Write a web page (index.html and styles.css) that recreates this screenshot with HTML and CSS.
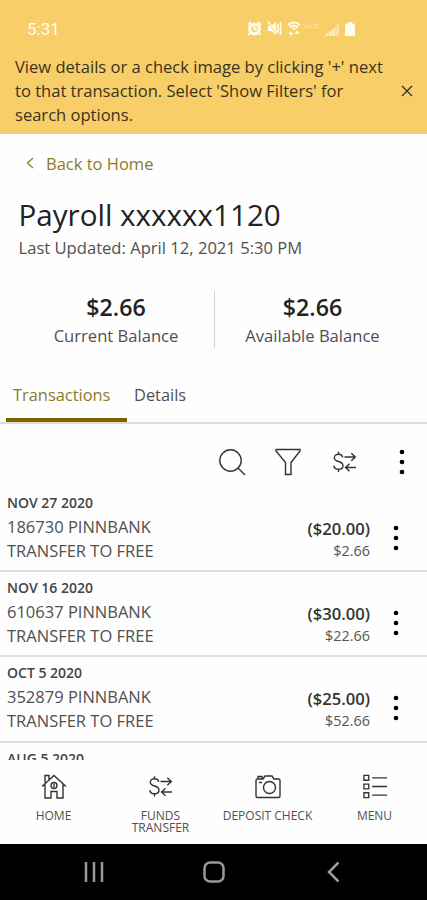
FILE: index.html
```html
<!DOCTYPE html>
<html lang="en">
<head>
<meta charset="utf-8">
<title>Account transactions</title>
<link rel="stylesheet" href="styles.css">
</head>
<body>
<svg width="0" height="0" class="defs">
  <symbol id="transfer" viewBox="0 0 24 22">
    <path d="M9.8 6.2C9.3 4.3 7.600 3.300 5.400 3.300C3 3.300 1.300 4.600 1.300 6.700C1.300 11.700 10 9.300 10 14.500C10 16.900 8 18.300 5.600 18.300C3 18.300 1.100 16.900 .8 14.600M5.500 .8V3.300M5.500 18.300V21"/>
    <path d="M11.500 6H22M18.300 2.200L22.300 6L18.300 9.800M23 16.500H12.500M16.500 12.700L12.500 16.500L16.500 20.300"/>
  </symbol>
  <symbol id="dots" viewBox="0 0 6 26">
    <circle cx="3" cy="3" r="2.350"/><circle cx="3" cy="13" r="2.350"/><circle cx="3" cy="23" r="2.350"/>
  </symbol>
</svg>
<div class="screen">
  <header class="notice">
    <div class="status">
      <span class="clock">5:31</span>
      <div class="indicators">
        <svg width="15" height="15" viewBox="0 0 15 15"><circle cx="7.500" cy="8" r="4.800" fill="none" stroke="#fffdf2" stroke-width="3"/><path d="M7.500 5V8.500H10M1 4L4 1M11 1L14 4M3 12L1.500 14M12 12L13.500 14" fill="none" stroke="#fffdf2" stroke-width="1.800"/></svg>
        <svg width="15" height="15" viewBox="0 0 15 15"><path d="M1 5H4L9 1V14L4 10H1Z" fill="#fffdf2"/><path d="M0 1L11 13" stroke="#f8ce68" stroke-width="1.200"/><path d="M0 0L11 12M11 3V12M13.500 1V14" stroke="#fffdf2" stroke-width="1.500"/></svg>
        <svg width="14" height="15" viewBox="0 0 14 15"><path d="M1 4Q7-1 13 4M3 6.500Q7 3 11 6.500" fill="none" stroke="#fffdf2" stroke-width="2"/><path d="M5 7.500Q7 6 9 7.500L7 9.500ZM1.500 11.500H6.500L4 15ZM7.500 13L10 9.500L12.500 13Z" fill="#fffdf2"/></svg>
        <span class="volte">VoLTE</span>
        <svg width="13" height="14" viewBox="0 0 13 14"><path d="M0 14L13 1V14Z" fill="#fffdf2" opacity=".4"/><path d="M1 11V14M4 9V14M7 7V14" stroke="#fffdf2" stroke-width="1.500" opacity=".7"/></svg>
        <svg class="battery" width="10" height="14" viewBox="0 0 10 14"><path d="M3 0H7V1.500H8.500Q10 1.500 10 3V14H0V3Q0 1.500 1.500 1.500H3Z" fill="#fffdf2"/></svg>
      </div>
    </div>
    <div class="message">
      <p>View details or a check image by clicking '+' next<br>to that transaction. Select 'Show Filters' for<br>search options.</p>
      <svg class="line" width="12" height="12" viewBox="0 0 12 12"><path d="M1 1L11 11M11 1L1 11"/></svg>
    </div>
  </header>

  <a class="back"><svg width="8" height="12" viewBox="0 0 8 12"><path d="M7 1L1.500 6L7 11"/></svg><span>Back to Home</span></a>
  <h1>Payroll xxxxxx1120</h1>
  <p class="updated">Last Updated: April 12, 2021 5:30 PM</p>

  <section class="balances">
    <div class="balance"><strong>$2.66</strong><span>Current Balance</span></div>
    <div class="balance"><strong>$2.66</strong><span>Available Balance</span></div>
  </section>

  <nav class="tabs"><a class="tab active">Transactions</a><a class="tab">Details</a></nav>

  <div class="tools">
    <svg class="line" width="28" height="28" viewBox="0 0 28 28"><circle cx="12.500" cy="12.500" r="10.700"/><path d="M20 20L27 27"/></svg>
    <svg class="line funnel" width="26" height="28" viewBox="0 0 26 28"><path d="M1 1.500H25V3L16 14.500V26.500H10.500V14.500L1 3Z"/></svg>
    <svg class="line swap" width="24" height="22"><use href="#transfer"/></svg>
    <svg width="6" height="26"><use href="#dots"/></svg>
  </div>

  <main class="list">
    <article class="row"><div class="info"><h2>NOV 27 2020</h2><p>186730 PINNBANK</p><p>TRANSFER TO FREE</p></div><div class="amounts"><strong>($20.00)</strong><span>$2.66</span></div><svg width="6" height="26"><use href="#dots"/></svg></article>
    <article class="row"><div class="info"><h2>NOV 16 2020</h2><p>610637 PINNBANK</p><p>TRANSFER TO FREE</p></div><div class="amounts"><strong>($30.00)</strong><span>$22.66</span></div><svg width="6" height="26"><use href="#dots"/></svg></article>
    <article class="row"><div class="info"><h2>OCT 5 2020</h2><p>352879 PINNBANK</p><p>TRANSFER TO FREE</p></div><div class="amounts"><strong>($25.00)</strong><span>$52.66</span></div><svg width="6" height="26"><use href="#dots"/></svg></article>
    <article class="row"><div class="info"><h2>AUG 5 2020</h2></div></article>
  </main>

  <nav class="bottom">
    <a><svg class="line" width="26" height="26" viewBox="0 0 26 26"><path d="M1 13L13 2L25 13M4 11V24.500H10V18H16V24.500H22V11M4 9V2H8V6"/><circle cx="13" cy="12" r="3"/><path d="M13 10V14"/></svg><span>HOME</span></a>
    <a><svg class="line" width="24" height="26" viewBox="0 -2 24 26"><use href="#transfer" width="24" height="22"/></svg><span>FUNDS<br>TRANSFER</span></a>
    <a><svg class="line" width="28" height="26" viewBox="0 0 28 26"><path d="M3.500 5.500H9L11 2.500H18L20 5.500H24.500Q26 5.500 26 7V22.500Q26 24 24.500 24H3.500Q2 24 2 22.500V7Q2 5.500 3.500 5.500ZM4 5V3H8V5M5 9H8"/><circle cx="15.500" cy="14" r="6"/></svg><span>DEPOSIT CHECK</span></a>
    <a><svg class="line" width="26" height="28" viewBox="0 0 26 28"><path d="M1.500 2.500H6.500V7.500H1.500ZM1.500 11.500H6.500V16.500H1.500ZM1.500 20.500H6.500V25.500H1.500ZM10 5H25.500M10 14H25.500M10 23H25.500"/></svg><span>MENU</span></a>
  </nav>

  <footer class="system">
    <svg width="20" height="22" viewBox="0 0 20 22"><path d="M2 1V21M10 1V21M18 1V21"/></svg>
    <svg width="22" height="22" viewBox="0 0 22 22"><rect x="1.500" y="1.500" width="19" height="19" rx="5.500"/></svg>
    <svg width="13" height="22" viewBox="0 0 13 22"><path d="M11.500 1.500L2 11L11.500 20.500"/></svg>
  </footer>
</div>
</body>
</html>
```
FILE: styles.css
```css
* { box-sizing: border-box; }
body { margin: 0; font-family: "Open Sans", sans-serif; color: #505050; }
h1, h2, p { margin: 0; font-weight: 400; }
svg { display: block; flex: none; }
.defs { display: none; }
.line { fill: none; stroke: #333; stroke-width: 1.4; }
.screen { width: 427px; height: 900px; overflow: hidden; display: flex; flex-direction: column; background: #fefefe; white-space: nowrap; }

.notice { height: 134px; flex: none; background: #f8ce68; }
.status { height: 55px; padding: 2px 72px 0 27px; display: flex; align-items: center; justify-content: space-between; }
.clock { font: 17px Roboto, sans-serif; color: #fffdf2; }
.indicators { display: flex; align-items: center; gap: 5px; }
.volte { width: 20px; font: 6px Roboto, sans-serif; color: #fffdf2; opacity: .6; margin: -6px -2px 0 -3px; }
.battery { margin-left: 1px; }
.message { display: flex; align-items: center; justify-content: space-between; padding: 0 14px 0 15px; font-size: 16.56px; line-height: 24px; color: #3a3320; }

.back { display: flex; align-items: center; gap: 12px; height: 24px; margin: 17px 0 0 26px; font-size: 16.5px; color: #8c7b25; }
.back svg { fill: none; stroke: #8c7b25; stroke-width: 1.3; }
h1 { margin: 22px 0 0 18.5px; font-size: 29.6px; line-height: 36px; color: #222; }
.updated { margin: 1px 0 0 18.5px; font-size: 16.6px; line-height: 28px; }

.balances { display: grid; grid-template-columns: 196px 196px; margin: 29px 0 0 18px; height: 57px; }
.balance { display: flex; flex-direction: column; align-items: center; }
.balance + .balance { border-left: 1px solid #d2d2d2; }
.balance strong { font-size: 23.2px; line-height: 32px; font-weight: 600; color: #222; }
.balance span { font-size: 16.6px; line-height: 25px; }

.tabs { display: flex; height: 76px; padding: 34px 0 0 6px; border-bottom: 2px solid #ddd; }
.tab { height: 40px; padding: 0 7px; font-size: 16.4px; line-height: 26px; }
.tab.active { width: 121px; color: #8c7b25; border-bottom: 4px solid #806300; }

.tools { height: 63px; display: flex; align-items: center; padding: 12px 23px 0 218px; }
.funnel { margin-left: 29px; }
.swap { margin: 0 42px 0 32px; }

.list { height: 273px; overflow: hidden; }
.row { height: 85.2px; display: flex; padding: 0 28px 0 7px; border-bottom: 2px solid #ddd; }
.row h2 { margin: 7px 0 3px; font-size: 14px; line-height: 18px; font-weight: 600; color: #444; }
.info { flex: 1; }
.info p { font-size: 16.5px; line-height: 23.5px; }
.amounts { display: flex; flex-direction: column; text-align: right; padding-top: 31px; margin-right: 23px; }
.amounts strong { font-size: 16.6px; font-weight: 600; line-height: 22px; color: #333; }
.amounts span { font-size: 14.4px; line-height: 21px; color: #555; }
.row > svg { margin-top: 38px; }

.bottom { height: 84px; display: grid; grid-template-columns: repeat(4, 107px); padding-top: 13px; }
.bottom a { display: flex; flex-direction: column; align-items: center; font-size: 12px; line-height: 12px; text-align: center; }
.bottom svg { height: 27px; margin-bottom: 10px; }
.system { height: 56px; flex: none; background: #000; display: flex; align-items: center; padding-left: 84px; }
.system svg { fill: none; stroke: #999; stroke-width: 2.5; }
.system svg + svg { margin-left: 99px; }
.system svg + svg + svg { margin-left: 102px; }
```
